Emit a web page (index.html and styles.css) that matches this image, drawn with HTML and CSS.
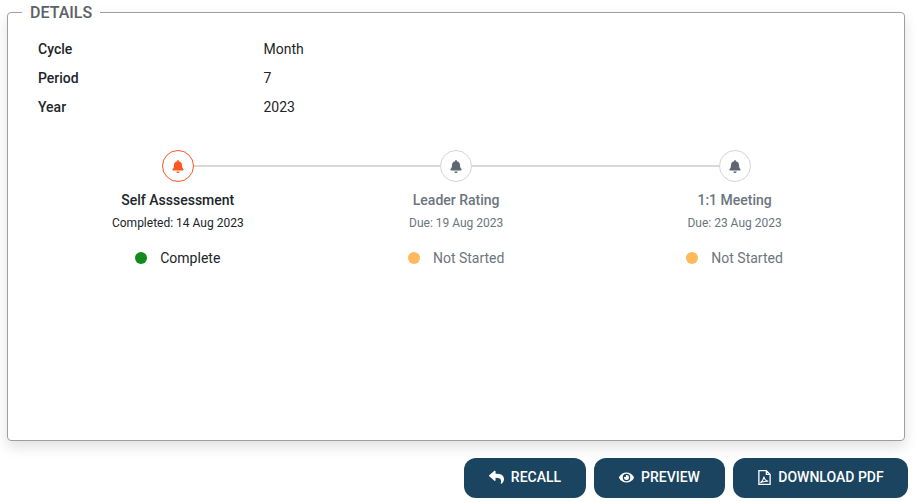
FILE: index.html
```html
<!DOCTYPE html>
<html lang="en">
  <head>
    <meta charset="UTF-8" />
    <meta name="viewport" content="width=device-width, initial-scale=1.0" />
    <title>Details</title>
    <link rel="stylesheet" href="styles.css">
  </head>
  <body>
    <fieldset class="details-card">
      <legend class="details-legend">DETAILS</legend>

      <div class="info-table">
        <div class="info-label">Cycle</div>
        <div class="info-value">Month</div>
        <div class="info-label">Period</div>
        <div class="info-value">7</div>
        <div class="info-label">Year</div>
        <div class="info-value">2023</div>
      </div>

      <div class="stepper">
        <div class="step step-active">
          <div class="step-icon">
            <svg class="bell" viewBox="0 0 448 512"><path d="M224 512c35 0 64-29 64-64H160c0 35 29 64 64 64zm215-150c-19-21-56-52-56-154 0-78-54-140-127-155V32a32 32 0 0 0-64 0v21C119 68 65 130 65 208c0 102-37 133-56 154-6 6-9 14-9 22 0 16 13 32 32 32h384c19 0 32-16 32-32 0-8-3-16-9-22z"/></svg>
          </div>
          <div class="step-title">Self Asssessment</div>
          <div class="step-date">Completed: 14 Aug 2023</div>
          <div class="step-status"><span class="dot dot-green"></span>Complete</div>
        </div>

        <div class="step">
          <div class="step-icon">
            <svg class="bell" viewBox="0 0 448 512"><path d="M224 512c35 0 64-29 64-64H160c0 35 29 64 64 64zm215-150c-19-21-56-52-56-154 0-78-54-140-127-155V32a32 32 0 0 0-64 0v21C119 68 65 130 65 208c0 102-37 133-56 154-6 6-9 14-9 22 0 16 13 32 32 32h384c19 0 32-16 32-32 0-8-3-16-9-22z"/></svg>
          </div>
          <div class="step-title">Leader Rating</div>
          <div class="step-date">Due: 19 Aug 2023</div>
          <div class="step-status"><span class="dot dot-amber"></span>Not Started</div>
        </div>

        <div class="step">
          <div class="step-icon">
            <svg class="bell" viewBox="0 0 448 512"><path d="M224 512c35 0 64-29 64-64H160c0 35 29 64 64 64zm215-150c-19-21-56-52-56-154 0-78-54-140-127-155V32a32 32 0 0 0-64 0v21C119 68 65 130 65 208c0 102-37 133-56 154-6 6-9 14-9 22 0 16 13 32 32 32h384c19 0 32-16 32-32 0-8-3-16-9-22z"/></svg>
          </div>
          <div class="step-title">1:1 Meeting</div>
          <div class="step-date">Due: 23 Aug 2023</div>
          <div class="step-status"><span class="dot dot-amber"></span>Not Started</div>
        </div>
      </div>
    </fieldset>

    <div class="actions">
      <button type="button" class="action-button btn-recall">
        <svg class="btn-icon" viewBox="0 0 512 512"><path d="M8 179 184 27c15-13 40-2 40 18v80c161 2 288 34 288 187 0 62-40 123-84 155-14 10-33-3-28-19 45-145-22-184-176-186v88c0 21-25 32-40 19L8 217c-11-10-11-28 0-38z"/></svg>
        RECALL
      </button>
      <button type="button" class="action-button btn-preview">
        <svg class="btn-icon" viewBox="0 0 576 512"><path d="M572 241C518 135 410 64 288 64S58 135 4 241a32 32 0 0 0 0 30c54 106 162 177 284 177s230-71 284-177a32 32 0 0 0 0-30zM288 400a144 144 0 1 1 144-144 144 144 0 0 1-144 144zm0-240a95 95 0 0 0-25 4 48 48 0 0 1-67 67 96 96 0 1 0 92-71z"/></svg>
        PREVIEW
      </button>
      <button type="button" class="action-button btn-download">
        <svg class="btn-icon" viewBox="0 0 14 16"><path d="M1 .7h8l4 4v10.600H1z M9 .7v4h4" fill="none" stroke="currentColor" stroke-width="1.400"/><path d="M2.600 13.600c1.600-1 3.200-3.400 3.800-6.600.5 2.600 2 4.600 4.600 5-2.800-.2-5.600.4-8.400 1.600z" fill="none" stroke="currentColor" stroke-width="1.100"/></svg>
        DOWNLOAD PDF
      </button>
    </div>
  </body>
</html>
```

FILE: styles.css
```css
* {
  margin: 0;
  padding: 0;
  box-sizing: border-box;
}

body {
  font-family: Roboto, "Liberation Sans", sans-serif;
  font-size: 14px;
  color: #212529;
  background: white;
  padding: 2px 16px 0 7px;
}

.details-card {
  height: 439px;
  padding: 12px 30px 0 30px;
  border: 1px solid #9e9e9e;
  border-radius: 4px;
  box-shadow: 0 6px 14px rgba(0, 0, 0, 0.12);
  min-width: 0;
}

.details-legend {
  margin-left: -16px;
  padding: 2px 8px 0;
  font-size: 16px;
  font-weight: 500;
  line-height: 18px;
  color: #5a6268;
}

.info-table {
  display: grid;
  grid-template-columns: 225.500px 1fr;
  grid-auto-rows: 29px;
  align-items: center;
}

.info-label {
  font-weight: 500;
}

.stepper {
  display: grid;
  grid-template-columns: repeat(3, 278.400px);
  margin-top: 29px;
  margin-left: 0.600px;
}

.step {
  position: relative;
  display: flex;
  flex-direction: column;
  align-items: center;
}

/* connector to the next step */
.step:not(:last-child)::after {
  content: "";
  position: absolute;
  top: 15px;
  left: calc(50% + 16px);
  width: 246.400px;
  height: 2px;
  background: #d9d9d9;
}

.step-icon {
  width: 32px;
  height: 32px;
  border: 1px solid #d5d5d5;
  border-radius: 50%;
  display: flex;
  align-items: center;
  justify-content: center;
  color: #5f6670;
}

.bell {
  width: 12px;
  height: 13px;
  fill: currentColor;
}

.step-title {
  margin-top: 9px;
  font-weight: 500;
  line-height: 18px;
  color: #6c757d;
}

.step-date {
  margin-top: 6px;
  font-size: 12px;
  line-height: 16px;
  color: #6c757d;
}

.step-status {
  margin-top: 18px;
  display: flex;
  align-items: center;
  gap: 13px;
  line-height: 18px;
  color: #6c757d;
}

.step-active .step-icon {
  border-color: #ff5722;
  color: #ff5722;
}

.step-active .step-title,
.step-active .step-date,
.step-active .step-status {
  color: #212529;
}

.dot {
  width: 12px;
  height: 12px;
  border-radius: 50%;
}

.dot-green {
  background: #138a1f;
}

.dot-amber {
  background: #ffb85c;
}

.actions {
  display: flex;
  justify-content: flex-end;
  gap: 8px;
  margin-top: 17px;
  margin-right: -3px;
}

.action-button {
  height: 40px;
  padding-bottom: 2px;
  border: none;
  border-radius: 12px;
  background: #1a4460;
  color: white;
  font-family: inherit;
  font-size: 14px;
  font-weight: 500;
  display: flex;
  align-items: center;
  justify-content: center;
  gap: 7px;
}

.btn-recall {
  width: 122px;
}

.btn-preview {
  width: 131px;
}

.btn-download {
  width: 175px;
  gap: 6px;
}

.btn-icon {
  width: 15px;
  height: 15px;
  fill: currentColor;
}
```
